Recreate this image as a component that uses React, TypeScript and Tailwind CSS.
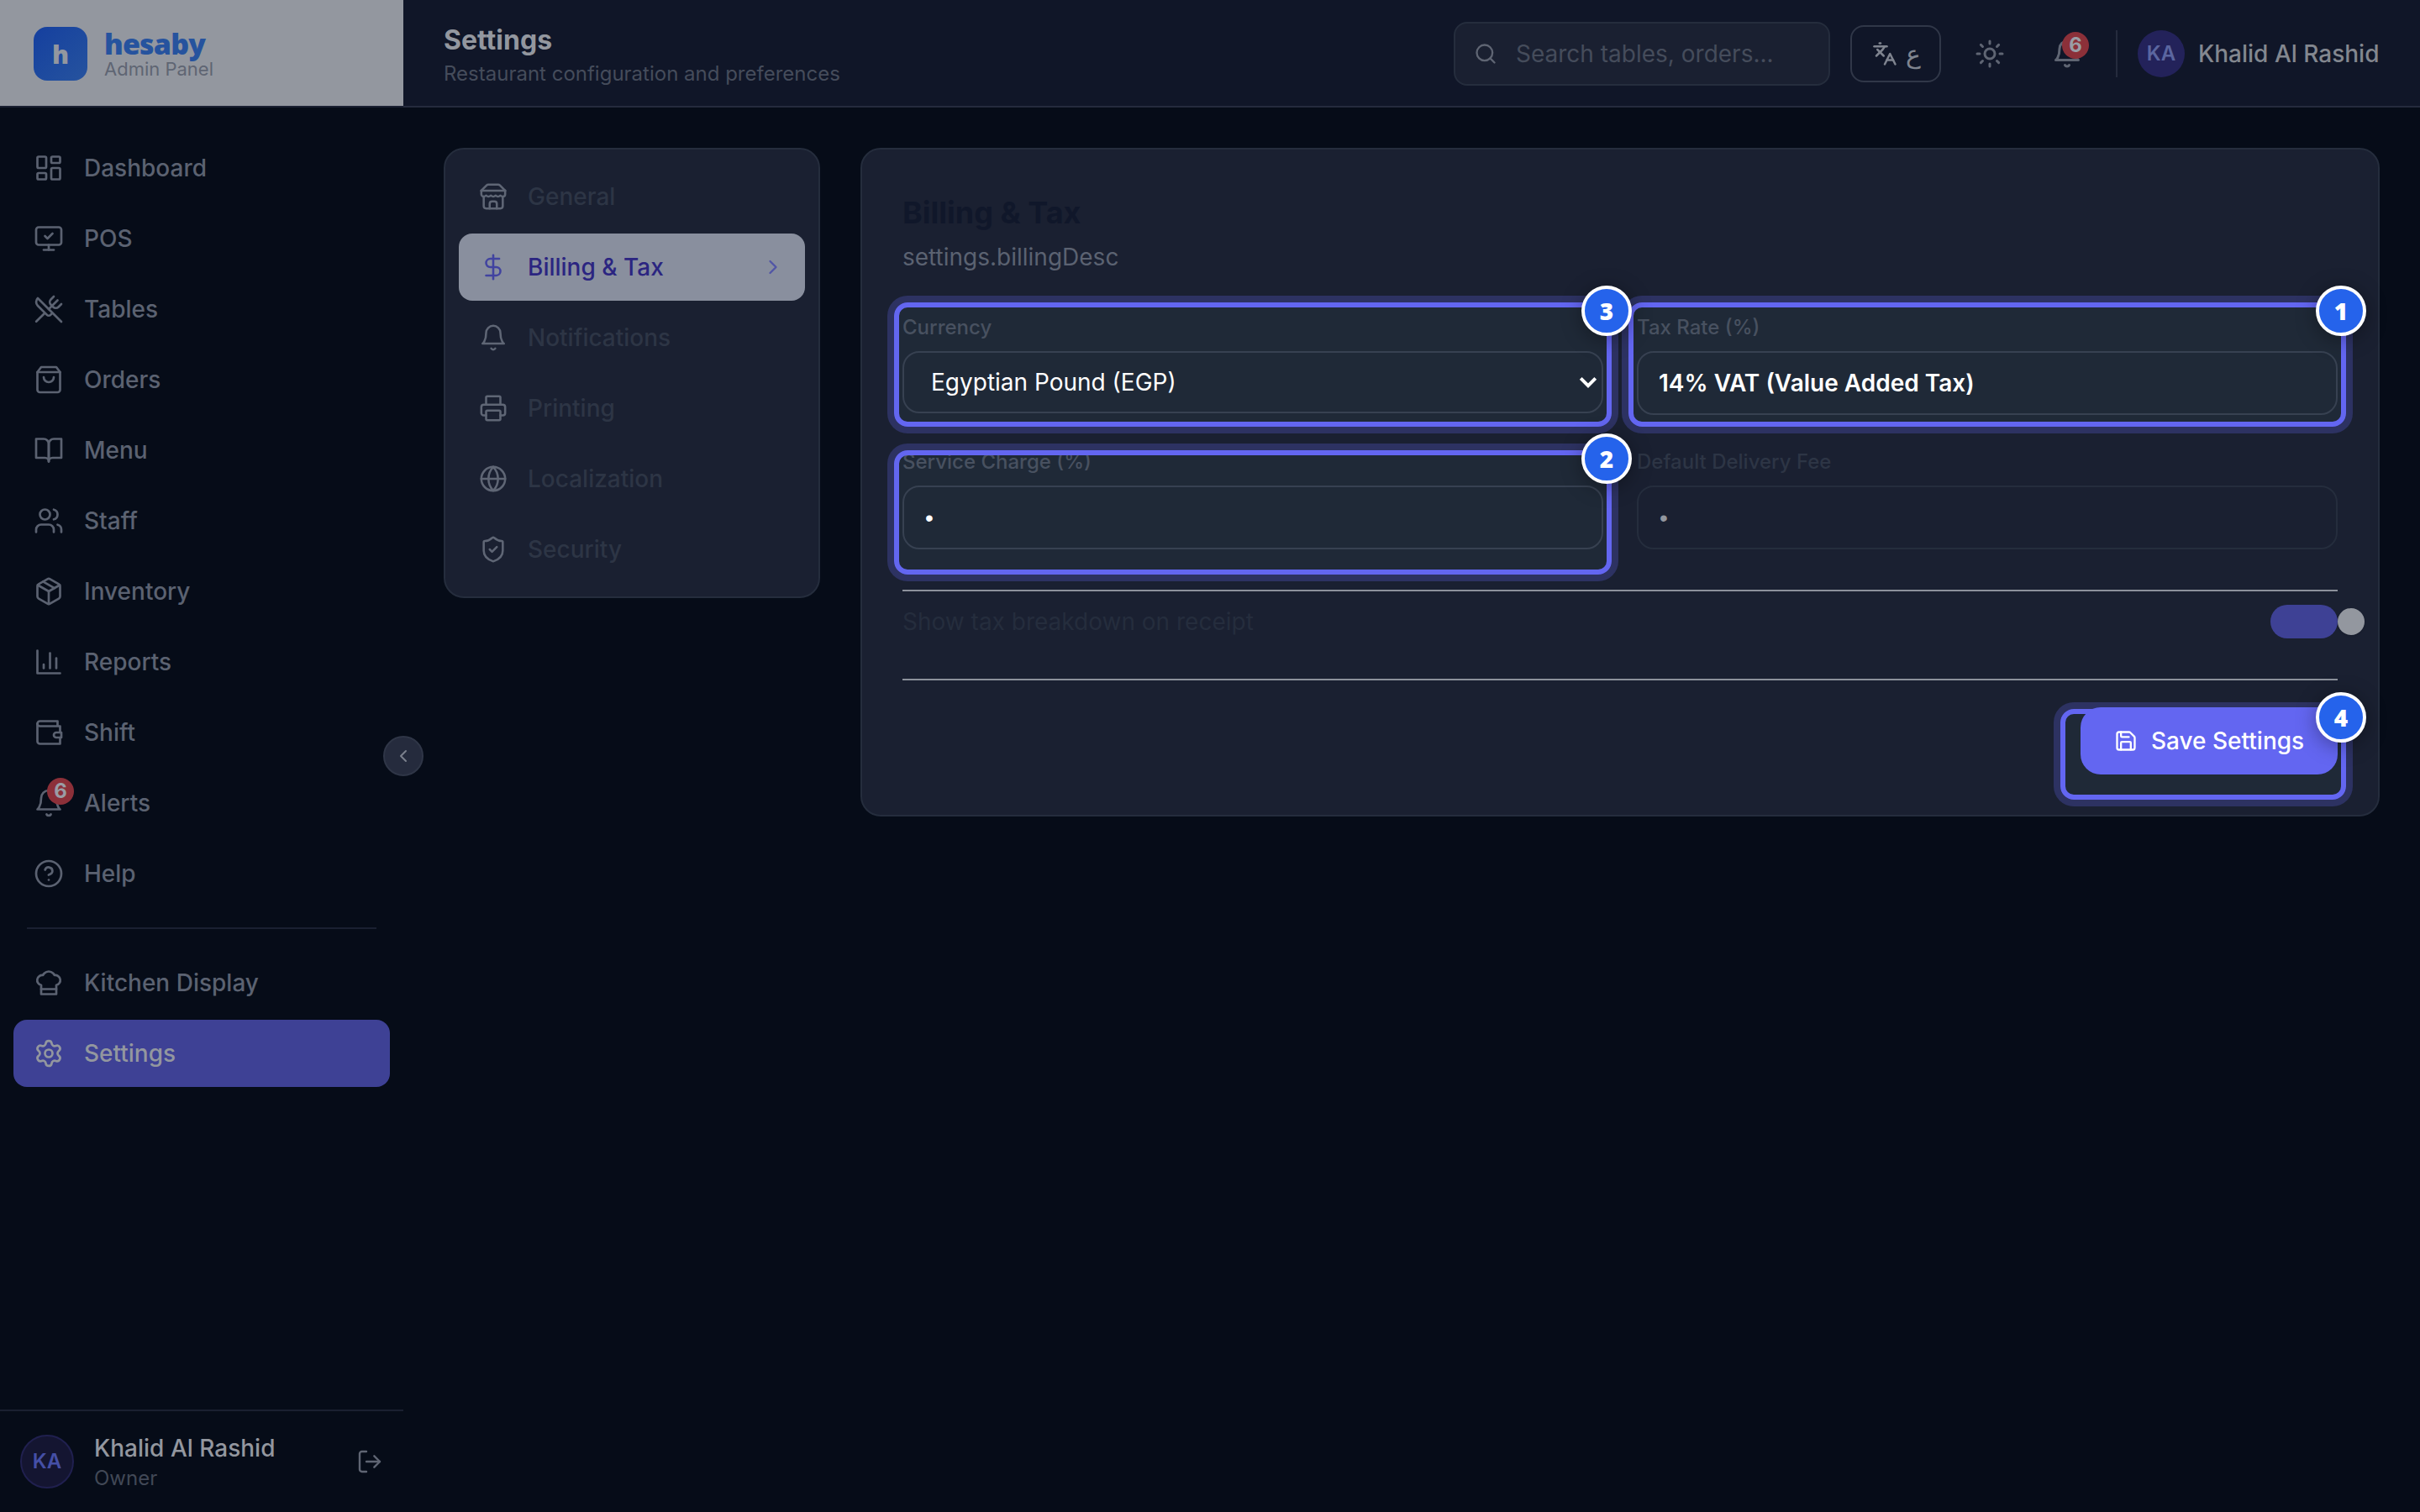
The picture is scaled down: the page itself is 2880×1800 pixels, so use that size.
import React from 'react';
import {
  ChevronLeft,
  ChevronRight,
  DollarSign,
  Globe,
  Languages,
  LayoutDashboard,
  LogOut,
  MonitorCheck,
  Package,
  Printer,
  Save,
  Search,
  Settings,
  ShieldCheck,
  Sun,
  Users,
  UtensilsCrossed,
} from 'lucide-react';

type IconProps = { className?: string; strokeWidth?: number };

function Glyph({ className, strokeWidth = 2, children }: IconProps & { children: React.ReactNode }) {
  return (
    <svg
      viewBox="0 0 24 24"
      fill="none"
      stroke="currentColor"
      strokeWidth={strokeWidth}
      strokeLinecap="round"
      strokeLinejoin="round"
      className={className}
    >
      {children}
    </svg>
  );
}

const BagIcon = (props: IconProps) => (
  <Glyph {...props}>
    <path d="M6 2 3 6v14a2 2 0 0 0 2 2h14a2 2 0 0 0 2-2V6l-3-4Z" />
    <path d="M3 6h18" />
    <path d="M16 10a4 4 0 0 1-8 0" />
  </Glyph>
);

const BookIcon = (props: IconProps) => (
  <Glyph {...props}>
    <path d="M2 3h6a4 4 0 0 1 4 4v14a3 3 0 0 0-3-3H2z" />
    <path d="M22 3h-6a4 4 0 0 0-4 4v14a3 3 0 0 1 3-3h7z" />
  </Glyph>
);

const BellIcon = (props: IconProps) => (
  <Glyph {...props}>
    <path d="M6 8a6 6 0 0 1 12 0c0 7 3 9 3 9H3s3-2 3-9" />
    <path d="M10.3 21a1.94 1.94 0 0 0 3.4 0" />
  </Glyph>
);

const ChartIcon = (props: IconProps) => (
  <Glyph {...props}>
    <path d="M3 3v18h18" />
    <path d="M18 17V9" />
    <path d="M13 17V5" />
    <path d="M8 17v-3" />
  </Glyph>
);

const WalletIcon = (props: IconProps) => (
  <Glyph {...props}>
    <path d="M21 12V7H5a2 2 0 0 1 0-4h14v4" />
    <path d="M3 5v14a2 2 0 0 0 2 2h16v-5" />
    <path d="M18 12a2 2 0 0 0 0 4h4v-4Z" />
  </Glyph>
);

const HelpIcon = (props: IconProps) => (
  <Glyph {...props}>
    <circle cx="12" cy="12" r="10" />
    <path d="M9.09 9a3 3 0 0 1 5.83 1c0 2-3 3-3 3" />
    <path d="M12 17h.01" />
  </Glyph>
);

const ChefIcon = (props: IconProps) => (
  <Glyph {...props}>
    <path d="M6 13.87A4 4 0 0 1 7.41 6a5.11 5.11 0 0 1 1.05-1.54 5 5 0 0 1 7.08 0A5.11 5.11 0 0 1 16.59 6 4 4 0 0 1 18 13.87V21H6Z" />
    <path d="M6 17h12" />
  </Glyph>
);

const StoreIcon = (props: IconProps) => (
  <Glyph {...props}>
    <path d="m2 7 4.41-4.41A2 2 0 0 1 7.83 2h8.34a2 2 0 0 1 1.42.59L22 7" />
    <path d="M4 12v8a2 2 0 0 0 2 2h12a2 2 0 0 0 2-2v-8" />
    <path d="M15 22v-4a2 2 0 0 0-2-2h-2a2 2 0 0 0-2 2v4" />
    <path d="M2 7h20" />
    <path d="M22 7v3a2 2 0 0 1-2 2a2.7 2.7 0 0 1-1.59-.63.7.7 0 0 0-.82 0A2.7 2.7 0 0 1 16 12a2.7 2.7 0 0 1-1.59-.63.7.7 0 0 0-.82 0A2.7 2.7 0 0 1 12 12a2.7 2.7 0 0 1-1.59-.63.7.7 0 0 0-.82 0A2.7 2.7 0 0 1 8 12a2.7 2.7 0 0 1-1.59-.63.7.7 0 0 0-.82 0A2.7 2.7 0 0 1 4 12a2 2 0 0 1-2-2V7" />
  </Glyph>
);

const navItems = [
  { name: 'Dashboard', icon: LayoutDashboard },
  { name: 'POS', icon: MonitorCheck },
  { name: 'Tables', icon: UtensilsCrossed },
  { name: 'Orders', icon: BagIcon },
  { name: 'Menu', icon: BookIcon },
  { name: 'Staff', icon: Users },
  { name: 'Inventory', icon: Package },
  { name: 'Reports', icon: ChartIcon },
  { name: 'Shift', icon: WalletIcon },
  { name: 'Alerts', icon: BellIcon, badge: 6 },
  { name: 'Help', icon: HelpIcon },
];

const bottomItems = [
  { name: 'Kitchen Display', icon: ChefIcon },
  { name: 'Settings', icon: Settings, active: true },
];

const sections = [
  { name: 'General', icon: StoreIcon },
  { name: 'Billing & Tax', icon: DollarSign, active: true },
  { name: 'Notifications', icon: BellIcon },
  { name: 'Printing', icon: Printer },
  { name: 'Localization', icon: Globe },
  { name: 'Security', icon: ShieldCheck },
];

function CountBadge({ value, className }: { value: number; className: string }) {
  return (
    <span
      className={`absolute flex h-8 w-8 items-center justify-center rounded-full bg-[#8c3039] text-2xl leading-none font-bold text-[#9a9da5] ${className}`}
    >
      {value}
    </span>
  );
}

function NavItem({ item }: { item: { name: string; icon: React.ElementType; badge?: number; active?: boolean } }) {
  return (
    <a
      className={`flex h-20 items-center gap-6 rounded-2xl px-6 text-[28px] font-medium ${
        item.active ? 'bg-[#3e4195] text-[#93979f]' : 'text-[#5b6271]'
      }`}
    >
      <span className="relative">
        <item.icon className="h-9 w-9" strokeWidth={1.8} />
        {item.badge && <CountBadge value={item.badge} className="-top-3 -right-3" />}
      </span>
      {item.name}
    </a>
  );
}

function Sidebar() {
  return (
    <aside className="relative flex w-[480px] shrink-0 flex-col bg-[#060c18]">
      <div className="flex h-32 items-center gap-5 border-b-2 border-[#1a2031] bg-[#93979f] px-10 pt-0.5">
        <div className="flex h-16 w-16 items-center justify-center rounded-2xl bg-linear-to-br from-[#153f9f] to-[#26539e] font-['Open_Sans',sans-serif] text-[30px] font-extrabold text-[#93979f]">
          h
        </div>
        <div>
          <div className="font-['Open_Sans',sans-serif] text-[34px] leading-9 font-extrabold tracking-tight text-[#26539e]">
            hesaby
          </div>
          <div className="text-[22px] leading-6 text-[#5f6573]">Admin Panel</div>
        </div>
      </div>

      <nav className="flex flex-1 flex-col gap-1 px-4 pt-8">
        {navItems.map((item) => (
          <NavItem key={item.name} item={item} />
        ))}
        <div className="mx-4 my-5 h-0.5 bg-[#1a2031]" />
        {bottomItems.map((item) => (
          <NavItem key={item.name} item={item} />
        ))}
      </nav>

      <div className="flex h-[122px] items-center border-t-2 border-[#1a2031] px-6">
        <div className="flex h-16 w-16 items-center justify-center rounded-full border-2 border-[#20204f] bg-[#141531] text-2xl font-semibold text-[#454fa6]">
          KA
        </div>
        <div className="ml-6 flex-1 pt-0.5">
          <div className="text-[28px] leading-9 font-medium text-[#93979f]">Khalid Al Rashid</div>
          <div className="mt-0.5 text-2xl leading-8 text-[#414856]">Owner</div>
        </div>
        <LogOut className="h-8 w-8 text-[#5f6573]" strokeWidth={1.8} />
      </div>

      <button className="absolute top-[876px] -right-6 z-10 flex h-12 w-12 items-center justify-center rounded-full border-2 border-[#2f3647] bg-[#252b3d] text-[#7b808c]">
        <ChevronLeft className="h-6 w-6" />
      </button>
    </aside>
  );
}

function Header() {
  return (
    <header className="flex h-32 items-center border-b-2 border-[#252b3d] bg-[#101628] px-12 pt-0.5">
      <div className="mt-2 flex-1">
        <h1 className="text-[32px] leading-10 font-bold text-[#93979f]">Settings</h1>
        <p className="text-2xl leading-10 text-[#454c5b]">Restaurant configuration and preferences</p>
      </div>

      <div className="flex h-[76px] w-[448px] items-center gap-[22px] rounded-2xl border-2 border-[#252d3d] bg-[#1a2031] px-[22px]">
        <Search className="h-7 w-7 text-[#5f6573]" />
        <span className="text-[28px] text-[#454c5b]">Search tables, orders...</span>
      </div>

      <button className="ml-6 flex h-[68px] w-[108px] items-center gap-2.5 rounded-2xl border-2 border-[#303748] px-6 text-[#7f848f]">
        <Languages className="h-[30px] w-[30px] shrink-0" />
        <span className="text-[30px] leading-8 font-medium">ع</span>
      </button>

      <Sun className="ml-10 h-9 w-9 text-[#5f6573]" />
      <span className="relative ml-14">
        <BellIcon className="h-9 w-9 text-[#5f6573]" />
        <CountBadge value={6} className="-top-2 -right-2" />
      </span>

      <div className="ml-10 h-14 w-0.5 bg-[#252b3d]" />
      <div className="ml-6 flex items-center gap-4">
        <div className="flex h-14 w-14 items-center justify-center rounded-full bg-[#23225a] text-2xl font-semibold text-[#5b66a0]">
          KA
        </div>
        <span className="w-[216px] text-[28px] font-medium whitespace-nowrap text-[#83878f]">Khalid Al Rashid</span>
      </div>
    </header>
  );
}

function SectionMenu() {
  return (
    <div className="flex w-[448px] shrink-0 flex-col gap-1 self-start rounded-3xl border-2 border-[#252d3d] bg-[#1a2031] p-4">
      {sections.map((section) => (
        <a
          key={section.name}
          className={`flex h-20 items-center gap-6 rounded-2xl px-6 text-[28px] font-medium ${
            section.active ? 'bg-[#898f9e] text-[#2b2581]' : 'text-[#2d3545]'
          }`}
        >
          <section.icon
            className={`h-[34px] w-[34px] ${section.active ? 'text-[#4143a0]' : 'text-[#5f6675]'}`}
            strokeWidth={1.8}
          />
          <span className="flex-1">{section.name}</span>
          {section.active && <ChevronRight className="h-7 w-7 text-[#5155a6]" />}
        </a>
      ))}
    </div>
  );
}

// Numbered callout frame; the fill sits behind the content and the outline above it.
function Callout({ step, className, outline = 'z-10' }: { step: number; className: string; outline?: string }) {
  return (
    <>
      <div className={`absolute -z-10 rounded-2xl bg-[#1f2937] ${className}`} />
      <div
        className={`absolute rounded-2xl border-6 border-[#6366f1] shadow-[0_0_0_8px_#2d3262] ${outline} ${className}`}
      />
      <div className={`pointer-events-none absolute z-20 ${className}`}>
        <span className="absolute -top-5 -right-6 flex h-[60px] w-[60px] items-center justify-center rounded-full border-4 border-white bg-[#2563eb] font-['Open_Sans',sans-serif] text-[28px] leading-none font-extrabold text-white shadow-[0_4px_24px_rgba(0,0,0,0.35)]">
          {step}
        </span>
      </div>
    </>
  );
}

function Field({
  label,
  lit,
  children,
  callout,
}: {
  label: string;
  lit?: boolean;
  children: React.ReactNode;
  callout?: React.ReactNode;
}) {
  return (
    <div className="relative h-[120px]">
      {callout}
      <label className={`mb-3 block text-2xl leading-8 font-medium ${lit ? 'text-[#485160]' : 'text-[#2d3545]'}`}>
        {label}
      </label>
      {children}
    </div>
  );
}

function BillingCard() {
  return (
    <section className="isolate flex-1 rounded-3xl border-2 border-[#252d3d] bg-[#1a2031] p-12">
      <h2 className="text-[36px] leading-[54px] font-bold text-[#10172a]">Billing &amp; Tax</h2>
      <p className="mt-1.5 text-[28px] leading-10 text-[#5b6271]">settings.billingDesc</p>

      <div className="mt-12 grid grid-cols-2 gap-10">
        <Field label="Currency" lit callout={<Callout step={3} className="-inset-x-2.5 -inset-y-3.5" />}>
          <div className="flex h-[74px] items-center justify-between rounded-[20px] border-2 border-[#374151] pr-0.5 pl-8 text-[28px] text-white">
            Egyptian Pound (EGP)
            <svg viewBox="0 0 24 24" className="h-7 w-7" fill="none" stroke="currentColor" strokeWidth="3.4">
              <path d="m4.5 8 7.5 7.5L19.5 8" />
            </svg>
          </div>
        </Field>
        <Field label="Tax Rate (%)" lit callout={<Callout step={1} className="-inset-x-2.5 -inset-y-3.5" />}>
          <div className="flex h-[76px] items-center rounded-[20px] border-2 border-[#374151] px-6 text-[28px] font-semibold text-white">
            14% VAT (Value Added Tax)
          </div>
        </Field>
        <Field
          label="Service Charge (%)"
          lit
          callout={<Callout step={2} className="-inset-x-2.5 top-0.5 -bottom-[30px]" />}
        >
          <div className="flex h-[76px] items-center rounded-[20px] border-2 border-[#374151] px-[25px] pt-px font-['Liberation_Sans',sans-serif] text-[28px] text-white">
            •
          </div>
        </Field>
        <Field label="Default Delivery Fee">
          <div className="flex h-[76px] items-center rounded-[20px] border-2 border-[#252d3d] px-[25px] pt-px font-['Liberation_Sans',sans-serif] text-[28px] text-[#93979f]">
            •
          </div>
        </Field>
      </div>

      <div className="mt-12 flex h-[106px] items-start justify-between border-t-2 border-[#8c919b] pt-4">
        <span className="text-[28px] leading-10 text-[#252d3d]">Show tax breakdown on receipt</span>
        <span className="relative h-10 w-20 rounded-full bg-[#3e4195]">
          <span className="absolute top-1 left-20 h-8 w-8 rounded-full bg-[#93979f] shadow-sm" />
        </span>
      </div>

      <div className="flex justify-end border-t-2 border-[#8c919b] pt-8">
        <div className="relative">
          <Callout step={4} outline="-z-10" className="top-0.5 -right-2.5 -bottom-[30px] -left-6" />
          <button className="flex h-20 w-[306px] items-center gap-4 rounded-3xl bg-[#6366f1] px-10 text-[28px] font-medium whitespace-nowrap text-white">
            <Save className="h-7 w-7 shrink-0" />
            Save Settings
          </button>
        </div>
      </div>
    </section>
  );
}

export default function App() {
  return (
    <div className="flex h-[1800px] w-[2880px] overflow-hidden bg-[#060c18] font-['Inter','Noto_Sans',sans-serif]">
      <Sidebar />
      <div className="flex min-w-0 flex-1 flex-col">
        <Header />
        <main className="flex flex-1 items-start gap-12 p-12">
          <SectionMenu />
          <BillingCard />
        </main>
      </div>
    </div>
  );
}
